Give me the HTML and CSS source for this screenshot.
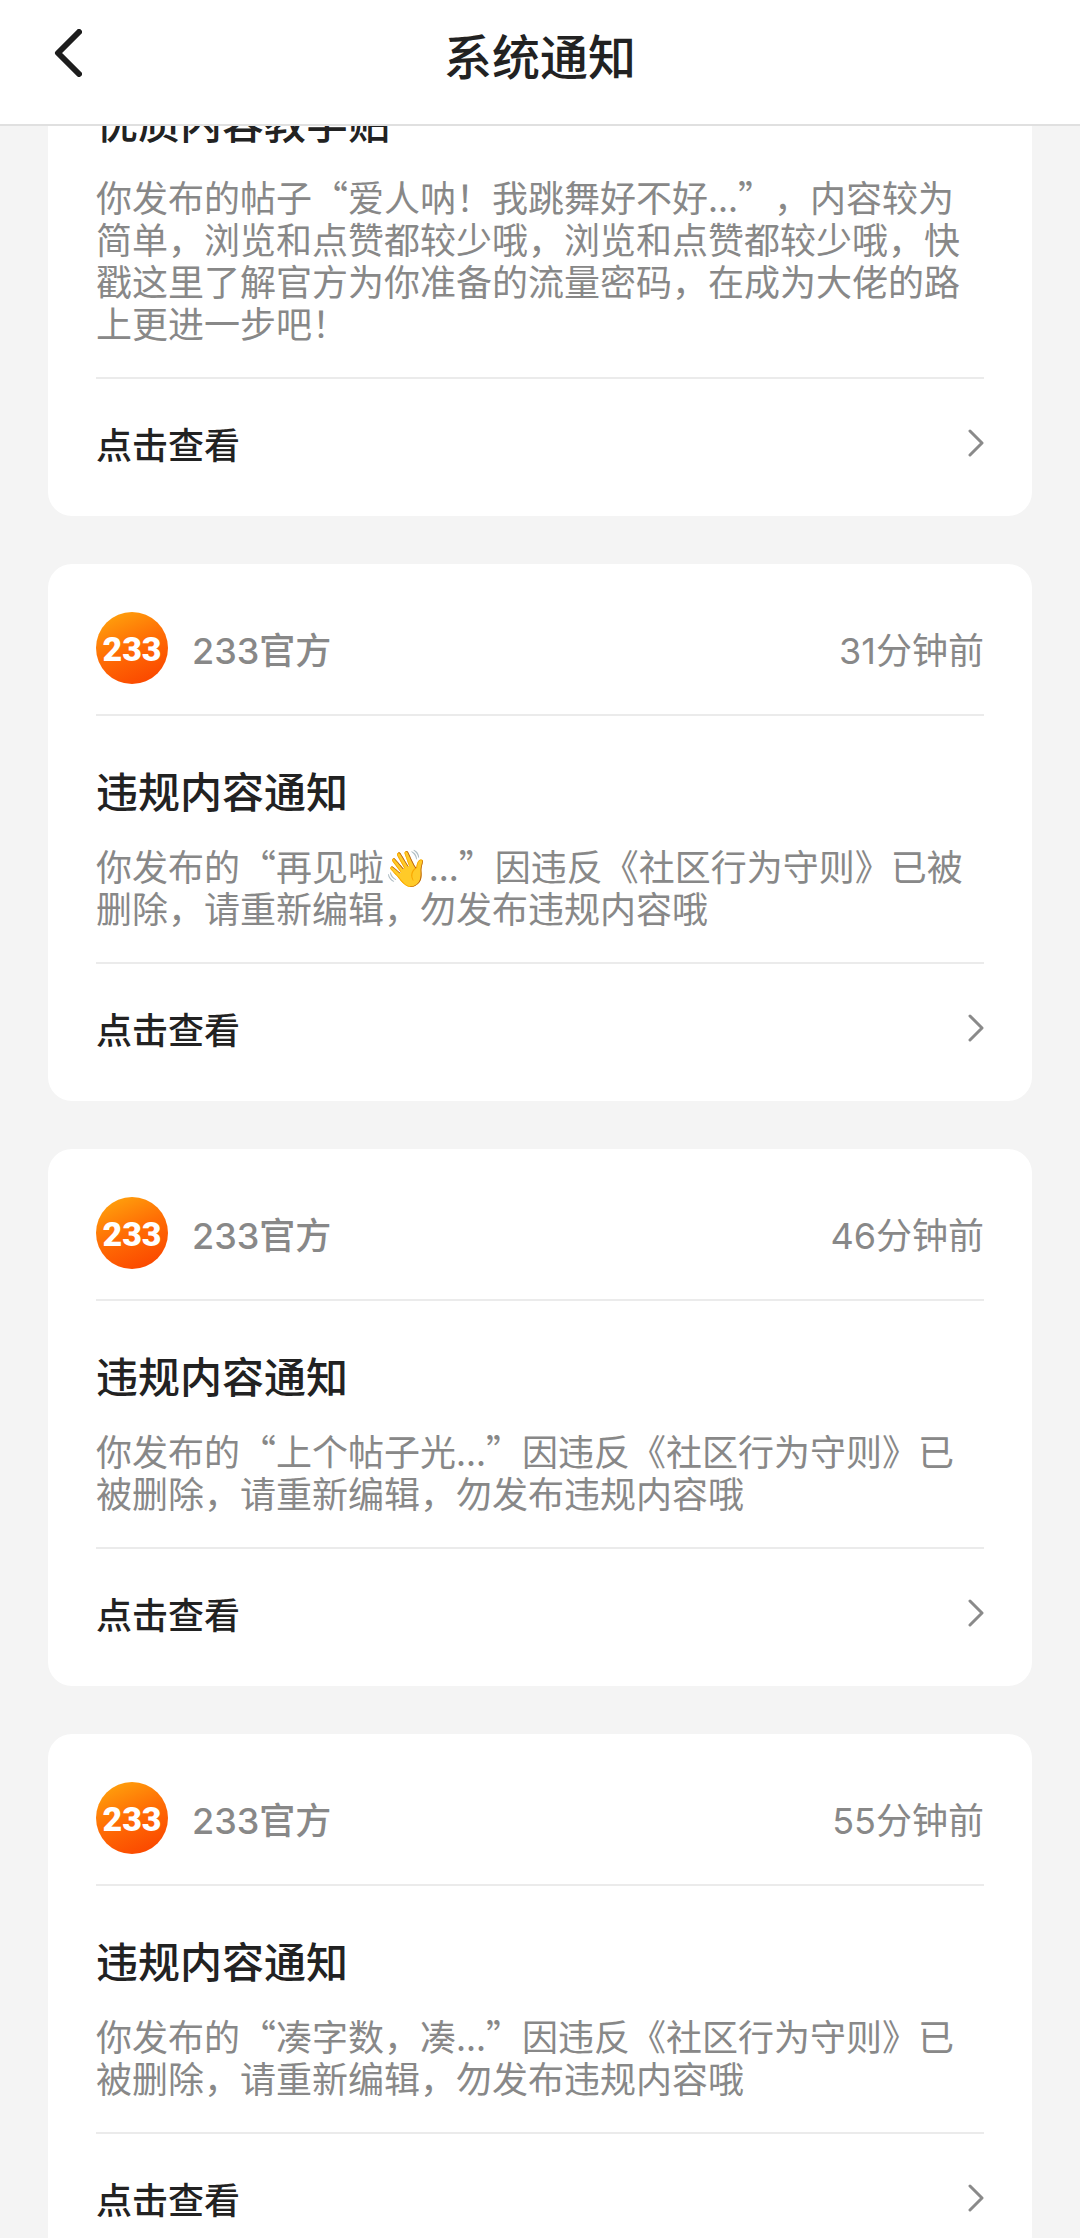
FILE: index.html
```html
<!DOCTYPE html>
<html lang="zh-CN">
<head>
<meta charset="utf-8">
<meta name="viewport" content="width=device-width, initial-scale=1">
<title>系统通知</title>
<link rel="stylesheet" href="styles.css">
</head>
<body>
<svg class="defs" aria-hidden="true">
  <defs>
    <linearGradient id="brand" x1="0.15" y1="0" x2="0.6" y2="1">
      <stop offset="0" stop-color="#ffa50d"/>
      <stop offset="0.5" stop-color="#ff6f05"/>
      <stop offset="1" stop-color="#fb4a00"/>
    </linearGradient>
    <symbol id="logo" viewBox="0 0 72 72">
      <circle cx="36" cy="36" r="36" fill="url(#brand)"/>
      <text x="36" y="49" class="logo-text">233</text>
    </symbol>
    <symbol id="chevron" viewBox="0 0 16 28">
      <path d="M2 2 L14 14 L2 26" fill="none" stroke="#8a8a8a" stroke-width="3" stroke-linecap="round" stroke-linejoin="round"/>
    </symbol>
  </defs>
</svg>
<div class="app">
  <header class="topbar">
    <button class="back" type="button" aria-label="返回">
      <svg class="back-icon" viewBox="0 0 28 48"><path d="M25 3 L4 24 L25 45" fill="none" stroke="#1d1d1d" stroke-width="6" stroke-linecap="round" stroke-linejoin="round"/></svg>
    </button>
    <h1 class="page-title">系统通知</h1>
  </header>
  <main class="feed">
    <div class="list">
      <article class="card">
        <div class="content content--first">
          <h2 class="title">优质内容教学贴</h2>
          <p class="text">你发布的帖子“爱人呐！我跳舞好不好...”，内容较为简单，浏览和点赞都较少哦，浏览和点赞都较少哦，快戳这里了解官方为你准备的流量密码，在成为大佬的路上更进一步吧！</p>
        </div>
        <a class="action" href="#">点击查看<svg class="chevron"><use href="#chevron"/></svg></a>
      </article>
      <article class="card">
        <div class="sender">
          <svg class="avatar"><use href="#logo"/></svg>
          <span class="name">233官方</span>
          <time class="time">31分钟前</time>
        </div>
        <div class="content">
          <h2 class="title">违规内容通知</h2>
          <p class="text">你发布的“再见啦<span class="emoji">👋</span>...”因违反《社区行为守则》已被删除，请重新编辑，勿发布违规内容哦</p>
        </div>
        <a class="action" href="#">点击查看<svg class="chevron"><use href="#chevron"/></svg></a>
      </article>
      <article class="card">
        <div class="sender">
          <svg class="avatar"><use href="#logo"/></svg>
          <span class="name">233官方</span>
          <time class="time">46分钟前</time>
        </div>
        <div class="content">
          <h2 class="title">违规内容通知</h2>
          <p class="text">你发布的“上个帖子光...”因违反《社区行为守则》已被删除，请重新编辑，勿发布违规内容哦</p>
        </div>
        <a class="action" href="#">点击查看<svg class="chevron"><use href="#chevron"/></svg></a>
      </article>
      <article class="card">
        <div class="sender">
          <svg class="avatar"><use href="#logo"/></svg>
          <span class="name">233官方</span>
          <time class="time">55分钟前</time>
        </div>
        <div class="content">
          <h2 class="title">违规内容通知</h2>
          <p class="text">你发布的“凑字数，凑...”因违反《社区行为守则》已被删除，请重新编辑，勿发布违规内容哦</p>
        </div>
        <a class="action" href="#">点击查看<svg class="chevron"><use href="#chevron"/></svg></a>
      </article>
    </div>
  </main>
</div>
</body>
</html>
```
FILE: styles.css
```css
* {
  box-sizing: border-box;
}

body {
  margin: 0;
  background: #f4f4f4;
  color: #222;
  font-family: "Noto Sans CJK SC", sans-serif;
  font-size: 36px;
  text-spacing-trim: space-all;
}

h1,
h2,
p {
  margin: 0;
}

.defs {
  display: block;
  width: 0;
  height: 0;
}

.app {
  display: flex;
  flex-direction: column;
  height: 100vh;
}

.topbar {
  display: grid;
  grid-template-columns: 96px 1fr 96px;
  align-items: center;
  flex: none;
  padding: 18px 0 34px;
  border-bottom: 2px solid #e0e0e0;
  background: #fff;
}

.back {
  display: flex;
  justify-content: flex-end;
  padding: 0 14px 2px;
  border: 0;
  background: none;
}

.back-icon {
  width: 28px;
  height: 48px;
}

.page-title {
  font-size: 48px;
  font-weight: 500;
  line-height: 72px;
  text-align: center;
}

/* The feed opens part-way down the first notice. */
.feed {
  flex: 1;
  min-height: 0;
  overflow-y: auto;
  scrollbar-width: none;
}

.list {
  display: flex;
  flex-direction: column;
  gap: 48px;
  margin-top: -29px;
  padding: 0 48px 48px;
}

.card {
  padding: 0 48px;
  border-radius: 24px;
  background: #fff;
}

.sender {
  display: flex;
  align-items: center;
  gap: 24px;
  padding: 48px 0 30px;
  border-bottom: 2px solid #ebebeb;
  color: #888;
  font-family: Inter, "Noto Sans CJK SC", sans-serif;
}

.avatar {
  flex: none;
  width: 72px;
  height: 72px;
}

.logo-text {
  fill: #fff;
  font-family: Roboto, sans-serif;
  font-size: 34px;
  font-weight: 900;
  text-anchor: middle;
}

.name {
  font-weight: 500;
}

.time {
  margin-left: auto;
}

.content {
  padding: 50px 0 34px;
  border-bottom: 2px solid #ebebeb;
}

.content--first {
  padding-top: 0;
}

.title {
  margin-bottom: 30px;
  font-size: 42px;
  font-weight: 500;
  line-height: 48px;
}

.text {
  color: #888;
  line-height: 42px;
}

.emoji {
  font-family: "Noto Color Emoji", sans-serif;
  line-height: 0;
}

.action {
  display: flex;
  align-items: center;
  justify-content: space-between;
  padding: 40px 0 49px;
  color: #222;
  font-weight: 500;
  line-height: 48px;
  text-decoration: none;
}

.chevron {
  width: 16px;
  height: 28px;
}
```
